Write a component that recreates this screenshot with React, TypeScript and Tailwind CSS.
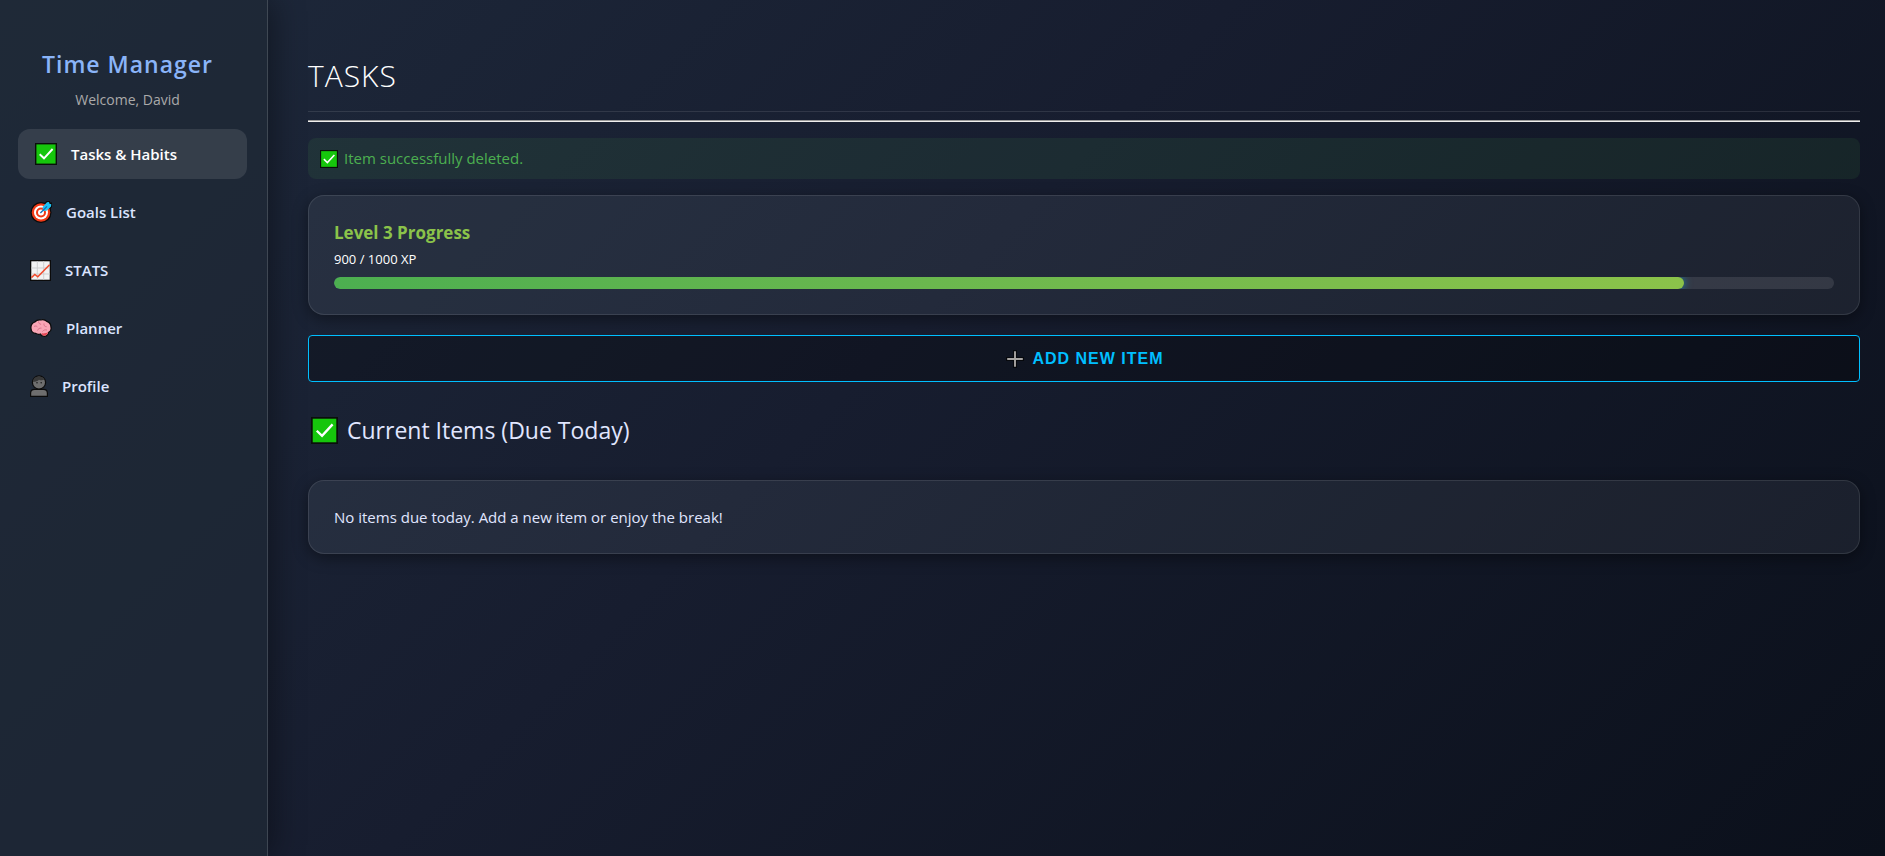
import React from "react";

interface IconProps {
  className?: string;
}

type NavItem = {
  label: string;
  href: string;
  icon: React.ReactNode;
  active?: boolean;
};

const CheckIcon: React.FC<IconProps> = ({ className }) => (
  <svg viewBox="0 0 22 22" className={className} aria-hidden="true">
    <rect x="0" y="0" width="22" height="22" fill="#0a0f0a" />
    <rect x="1.4" y="1.4" width="19.2" height="19.2" fill="#16c60c" />
    <path
      d="M4.7 11.2 9 15.3 17.6 6"
      fill="none"
      stroke="#fff"
      strokeWidth="1.9"
    />
  </svg>
);

const TargetIcon: React.FC<IconProps> = ({ className }) => (
  <svg viewBox="0 0 22 22" className={className} aria-hidden="true">
    <circle cx="11" cy="11.5" r="10.5" fill="#0b0b0b" />
    <path d="M12 5 16.500 0H20v1.500h2V6l-4 4.500-5 1z" fill="#0b0b0b" />
    <circle cx="11" cy="11.5" r="9.3" fill="#f03a17" />
    <circle cx="11" cy="11.5" r="7" fill="#fff" />
    <circle cx="11" cy="11.5" r="5" fill="#f03a17" />
    <circle cx="11" cy="11.5" r="3" fill="#fff" />
    <path d="m12.600 6 4.400-4.800 2-.2.500 1.700 1.800.5-.3 2.300-4.400 4.300-3.600.2z" fill="#1fc3f5" />
    <path d="m10.400 12 6.600-6.600" stroke="#0f6fb8" strokeWidth="1.300" />
  </svg>
);

const ChartIcon: React.FC<IconProps> = ({ className }) => (
  <svg viewBox="0 0 21 21" className={className} aria-hidden="true">
    <rect x="0" y="0" width="21" height="21" fill="#0b0b0b" />
    <rect x="1.3" y="1.3" width="18.4" height="18.4" fill="#f2f2f2" />
    <path
      d="M7.3 1.3v18.4M13.7 1.3v18.4M1.3 8h18.4M1.3 14h18.4"
      stroke="#cfcfcf"
      strokeWidth="1"
    />
    <path
      d="m1.4 17.6 3.4-3.2 3 2.4L19.6 4.8"
      fill="none"
      stroke="#f04a2c"
      strokeWidth="1.5"
    />
  </svg>
);

const BrainIcon: React.FC<IconProps> = ({ className }) => (
  <svg viewBox="0 0 22 22" className={className} aria-hidden="true">
    <path
      d="M1 11.5C.6 8.500 2.200 6 4.800 5c1.600-1.800 4-2.300 6-2 2.200-.6 4.600 0 6 1.400 2.600.8 4.200 3.400 4.200 6 .4 2.200-.6 4.200-2.200 4.800-.6 2.800-2 4.200-4.400 4.200-2 0-3.400-1-4-2.400-1.800.6-3.600.2-4.600-.6C3 16.600 1.200 14.600 1 11.500z"
      fill="#f9a5b5"
      stroke="#0b0b0b"
      strokeWidth="1.2"
    />
    <path
      d="M11.500 16.300c1.600.3 4.600.2 6.600-1.200-.5 2.200-1.800 3.600-3.800 3.600-1.400 0-2.500-.9-2.800-2.400z"
      fill="#e74856"
    />
    <path
      d="M4 9.500c1.200-.8 2.500-.6 3.400.4M8.500 4.500c.2 1.800 1 2.600 2.600 2.800M7.500 13.500c.6-1.800 2-2.600 4-2.400M14 6.500c-.4 1.800.6 3.200 2.600 3.200M12.500 14.500c1.200-1.600 2.800-2 4.500-1.400"
      fill="none"
      stroke="#d9748a"
      strokeWidth="1"
    />
  </svg>
);

const PersonIcon: React.FC<IconProps> = ({ className }) => (
  <svg viewBox="0 0 18 22" className={className} aria-hidden="true">
    <path
      d="M.6 21.400v-3.200c0-2.400 1.600-3.800 4-3.800h8.800c2.400 0 4 1.400 4 3.800v3.200z"
      fill="#6e6e6e"
      stroke="#0b0b0b"
      strokeWidth="1.2"
    />
    <circle cx="9" cy="7.500" r="6.600" fill="#6e6e6e" stroke="#0b0b0b" strokeWidth="1.2" />
    <path
      d="M3 6.800C3 3.400 5.600 1.500 9 1.500c2.600 0 4.600 1.200 5.500 3-2 1.200-4 .8-5.500.2C7.600 6.200 5.200 6.900 3 6.800z"
      fill="#383838"
    />
    <circle cx="7" cy="7.800" r=".8" fill="#1c1c1c" />
    <circle cx="11.200" cy="7.800" r=".8" fill="#1c1c1c" />
  </svg>
);

const PlusIcon: React.FC<IconProps> = ({ className }) => (
  <svg viewBox="0 0 18 18" className={className} aria-hidden="true">
    <path d="M9 0v18M0 9h18" stroke="#07090d" strokeWidth="4" />
    <path d="M9 1.2v15.600M1.2 9h15.600" stroke="#a8a5a3" strokeWidth="1.900" />
  </svg>
);

const navItems: NavItem[] = [
  {
    label: "Tasks & Habits",
    href: "#tasks",
    icon: <CheckIcon className="w-[22px] h-[22px]" />,
    active: true,
  },
  { label: "Goals List", href: "#goals", icon: <TargetIcon className="w-[22px] h-[22px]" /> },
  { label: "STATS", href: "#stats", icon: <ChartIcon className="w-[21px] h-[21px]" /> },
  { label: "Planner", href: "#planner", icon: <BrainIcon className="w-[22px] h-[22px]" /> },
  { label: "Profile", href: "#profile", icon: <PersonIcon className="w-[18px] h-[22px]" /> },
];

function Sidebar() {
  return (
    <aside className="w-[268px] shrink-0 border-r border-white/15 bg-[#1f2a36]/70 pt-12 pl-[13px] pr-[25px] shadow-[4px_0_30px_rgba(0,0,0,0.4)]">
      <h2 className="text-center text-[23px] leading-8 font-semibold tracking-[1px] text-[#8ab4f8]">
        Time Manager
      </h2>
      <p className="mt-2 text-center text-sm leading-6 text-[#aaaaaa]">Welcome, David</p>
      <nav className="mt-[17px] flex flex-col gap-2">
        {navItems.map((item) => (
          <a
            key={item.label}
            href={item.href}
            className={`flex h-[50px] items-center gap-[14px] rounded-xl px-[17px] text-[15px] font-semibold ${
              item.active ? "translate-x-[5px] bg-white/10 text-white" : "text-[#dbe4ff]"
            }`}
          >
            {item.icon}
            {item.label}
          </a>
        ))}
      </nav>
    </aside>
  );
}

function Card({ className = "", children }: { className?: string; children: React.ReactNode }) {
  return (
    <section
      className={`rounded-2xl border border-white/10 bg-[#f0fff8]/[0.06] p-[25px] shadow-[0_4px_15px_rgba(0,0,0,0.4)] ${className}`}
    >
      {children}
    </section>
  );
}

function LevelProgress({ level, xp, maxXp }: { level: number; xp: number; maxXp: number }) {
  return (
    <Card className="mt-4">
      <h3 className="text-[17px] leading-6 font-bold text-[#8bc34a]">Level {level} Progress</h3>
      <p className="text-[13px] leading-7 text-white">
        {xp} / {maxXp} XP
      </p>
      <div className="mt-1 h-3 overflow-hidden rounded-full bg-white/10">
        <div
          className="h-full rounded-full bg-linear-to-r from-[#4caf50] to-[#8bc34a] shadow-[0_0_8px_rgba(0,191,255,0.6)]"
          style={{ width: `${(xp / maxXp) * 100}%` }}
        />
      </div>
    </Card>
  );
}

export default function App() {
  return (
    <div className="flex min-h-screen bg-[linear-gradient(135deg,#1e293b_0%,#171d2f_45%,#0b101b_100%)] font-['Open_Sans',sans-serif] text-[#e0e6ff]">
      <Sidebar />
      <main className="min-w-0 flex-1 pt-[52px] pr-[25px] pl-10">
        <h1 className="border-b border-white/10 pb-3 text-[30px] leading-[47px] font-light tracking-[1px] text-white">
          TASKS
        </h1>
        <hr className="mt-2 border-y border-t-[#9a9a9a] border-b-[#f0efee]" />
        <p
          role="status"
          className="mt-4 flex h-[41px] items-center gap-[6px] rounded-lg bg-[#4caf50]/10 px-3 text-[15px] text-[#4caf50]"
        >
          <CheckIcon className="h-[18px] w-[18px]" />
          Item successfully deleted.
        </p>
        <LevelProgress level={3} xp={900} maxXp={1000} />
        <button
          type="button"
          className="mt-5 flex h-[47px] w-full items-center justify-center gap-2 rounded border border-[#00bfff] bg-black/25 pl-[2px] font-['Liberation_Sans',sans-serif] text-base font-bold tracking-[1px] text-[#00bfff]"
        >
          <PlusIcon className="h-[18px] w-[18px]" />
          ADD NEW ITEM
        </button>
        <h2 className="mt-7 flex items-center gap-[9px] px-[3px] text-[23px] leading-10">
          <CheckIcon className="h-[27px] w-[27px]" />
          Current Items (Due Today)
        </h2>
        <Card className="mt-[30px]">
          <p className="text-[15px] leading-[22px]">
            No items due today. Add a new item or enjoy the break!
          </p>
        </Card>
      </main>
    </div>
  );
}
